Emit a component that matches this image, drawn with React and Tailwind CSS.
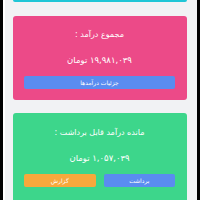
import React from 'react';

export default function App() {
  return (
    <div className="w-[200px] h-[200px] bg-black overflow-hidden flex" style={{ fontFamily: '"DejaVu Sans", "Noto Sans", sans-serif' }}>
      <div dir="rtl" className="ml-[3px] w-[194px] h-full bg-[#f1f2f4] border-l-[2px] border-white pl-[8px] pr-[10px] flex flex-col">
        {/* previous card, scrolled out */}
        <div className="h-[2px] bg-[#1fc6d6] rounded-b-[3px]" />

        {/* total income */}
        <div className="mt-[14px] h-[84px] bg-[#ec4a88] rounded-[3px] pt-[13px] pb-[11px] pl-[11px] pr-[12px] flex flex-col items-center text-white">
          <p className="text-[8px] leading-[12px] h-[12px]">مجموع درآمد :</p>
          <p className="mt-[13px] text-[8.5px] leading-[12px] h-[12px]">۱۹,۹۸۱,۰۳۹ تومان</p>
          <button className="mt-[10px] w-full h-[13px] bg-[#5a8cf0] rounded-[2px] text-[6px] leading-[13px] text-white">
            جزئیات درآمدها
          </button>
        </div>

        {/* withdrawable balance */}
        <div className="mt-[13px] h-[100px] bg-[#3dd68b] rounded-t-[3px] pt-[14px] pl-[11px] pr-[12px] flex flex-col items-center text-white">
          <p className="text-[8px] leading-[12px] h-[12px]">مانده درآمد قابل برداشت :</p>
          <p className="mt-[13px] text-[8.5px] leading-[12px] h-[12px]">۱,۰۵۷,۰۳۹ تومان</p>
          <div className="mt-[10px] w-full flex gap-[8px]">
            <button className="flex-1 h-[13px] bg-[#5a8cf0] rounded-[2px] text-[6px] leading-[13px] text-white">برداشت</button>
            <button className="flex-1 h-[13px] bg-[#f8a83c] rounded-[2px] text-[6px] leading-[13px] text-white">گزارش</button>
          </div>
        </div>
      </div>
    </div>
  );
}
